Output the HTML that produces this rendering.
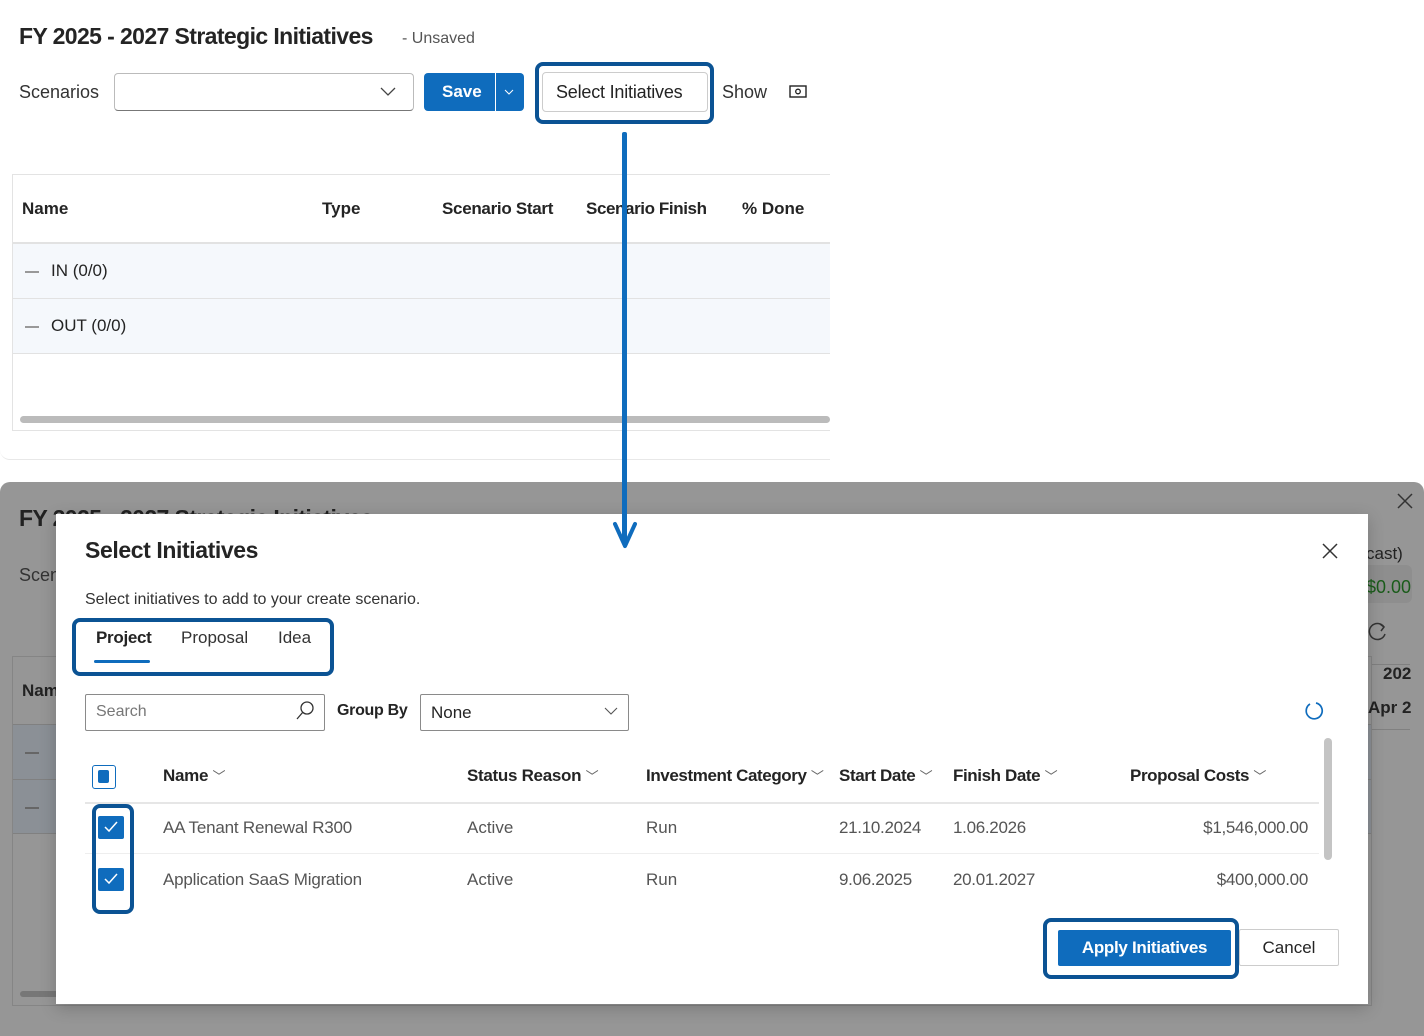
<!DOCTYPE html>
<html><head><meta charset="utf-8"><style>
*{box-sizing:border-box;margin:0;padding:0}
body{width:1424px;height:1036px;position:relative;background:#fff;font-family:"Segoe UI","Liberation Sans",sans-serif;color:#242424;overflow:hidden}
.a{position:absolute;white-space:nowrap}
.hl{position:absolute;border:4px solid #0b5394;border-radius:8px}
.r{text-align:right}
</style></head><body>
<div class="a" style="left:0;top:0;width:830px;height:460px;border-bottom-left-radius:10px;border-bottom:1px solid #e8e8e8"></div>
<div class="a" style="left:19px;top:23px;font-size:23px;font-weight:600;letter-spacing:-0.6px">FY 2025 - 2027 Strategic Initiatives</div>
<div class="a" style="left:402px;top:30px;font-size:16px;color:#555">- Unsaved</div>
<div class="a" style="left:19px;top:82px;font-size:18px;color:#333">Scenarios</div>
<div class="a" style="left:114px;top:73px;width:300px;height:38px;border:1px solid #bbb;border-bottom-color:#777;border-radius:4px"></div>
<svg class="a" style="left:380px;top:86px" width="16" height="12"><path d="M1 2l7 7 7-7" fill="none" stroke="#444" stroke-width="1.3"/></svg>
<div class="a" style="left:424px;top:73px;width:100px;height:38px;background:#0f6cbd;border-radius:4px"></div>
<div class="a" style="left:442px;top:82px;font-size:17px;color:#fff;font-weight:600">Save</div>
<div class="a" style="left:495px;top:73px;width:1px;height:38px;background:#fff"></div>
<svg class="a" style="left:504px;top:88px" width="10" height="8"><path d="M1 2l4 4 4-4" fill="none" stroke="#fff" stroke-width="1"/></svg>
<div class="hl" style="left:535px;top:62px;width:179px;height:62px"></div>
<div class="a" style="left:542px;top:72px;width:166px;height:40px;border:1px solid #ccc;border-radius:4px"></div>
<div class="a" style="left:556px;top:82px;font-size:18px;font-weight:500;letter-spacing:-0.2px">Select Initiatives</div>
<div class="a" style="left:722px;top:82px;font-size:18px;color:#333">Show</div>
<svg class="a" style="left:789px;top:84px" width="19" height="15"><rect x="1" y="2" width="16" height="11" fill="none" stroke="#222" stroke-width="1.4"/><circle cx="9" cy="7.5" r="2.3" fill="none" stroke="#222" stroke-width="1.3"/></svg>
<div class="a" style="left:12px;top:174px;width:818px;height:257px;border:1px solid #e3e3e3;border-right:none"></div>
<div class="a" style="left:22px;top:199px;font-size:17px;font-weight:600">Name</div>
<div class="a" style="left:322px;top:199px;font-size:17px;font-weight:600">Type</div>
<div class="a" style="left:442px;top:199px;font-size:17px;font-weight:600;letter-spacing:-0.3px">Scenario Start</div>
<div class="a" style="left:586px;top:199px;font-size:17px;font-weight:600;letter-spacing:-0.4px">Scenario Finish</div>
<div class="a" style="left:742px;top:199px;font-size:17px;font-weight:600">% Done</div>
<div class="a" style="left:13px;top:242px;width:817px;height:112px;background:#f5f8fc;border-top:2px solid #e2e2e2;border-bottom:1px solid #e2e2e2"></div>
<div class="a" style="left:13px;top:298px;width:817px;height:1px;background:#e2e2e2"></div>
<div class="a" style="left:25px;top:271px;width:14px;height:2px;background:#999"></div>
<div class="a" style="left:51px;top:261px;font-size:17px">IN (0/0)</div>
<div class="a" style="left:25px;top:326px;width:14px;height:2px;background:#999"></div>
<div class="a" style="left:51px;top:316px;font-size:17px">OUT (0/0)</div>
<div class="a" style="left:20px;top:416px;width:810px;height:7px;background:#bbb;border-radius:4px"></div>
<div class="a" style="left:0;top:482px;width:1424px;height:554px;background:#969696;border-radius:10px 10px 0 0"></div>
<div class="a" style="left:19px;top:505px;font-size:23px;font-weight:600;color:#222;letter-spacing:-0.6px">FY 2025 - 2027 Strategic Initiatives</div>
<div class="a" style="left:19px;top:565px;font-size:18px;color:#333">Scenarios</div>
<div class="a" style="left:12px;top:656px;width:1360px;height:350px;border:1px solid #858585"></div>
<div class="a" style="left:22px;top:681px;font-size:17px;font-weight:600;color:#222">Name</div>
<div class="a" style="left:13px;top:724px;width:1358px;height:110px;background:#8b9096;border-top:1px solid #808080;border-bottom:1px solid #808080"></div>
<div class="a" style="left:13px;top:779px;width:1358px;height:1px;background:#808080"></div>
<div class="a" style="left:25px;top:752px;width:14px;height:2px;background:#666"></div>
<div class="a" style="left:25px;top:807px;width:14px;height:2px;background:#666"></div>
<div class="a" style="left:20px;top:991px;width:40px;height:6px;background:#777;border-radius:3px"></div>
<svg class="a" style="left:1396px;top:492px" width="18" height="18"><path d="M2 2l14 14M16 2L2 16" stroke="#333" stroke-width="1.5"/></svg>
<div class="a" style="left:1366px;top:544px;font-size:17px;color:#222">cast)</div>
<div class="a" style="left:1360px;top:565px;width:52px;height:38px;background:#8e8e8e;border-radius:6px"></div>
<div class="a" style="left:1366px;top:577px;font-size:18px;color:#1a5c1a">$0.00</div>
<svg class="a" style="left:1366px;top:621px" width="22" height="22"><path d="M18 6A8 8 0 1 0 19 13" fill="none" stroke="#333" stroke-width="1.5"/><path d="M14 3l4 3-3 4" fill="none" stroke="#333" stroke-width="1.5"/></svg>
<div class="a" style="left:1372px;top:664px;width:38px;height:66px;border-top:1px solid #808080;border-bottom:1px solid #808080"></div>
<div class="a" style="left:1383px;top:664px;font-size:17px;font-weight:600;color:#222">202</div>
<div class="a" style="left:1368px;top:698px;font-size:17px;font-weight:600;color:#222">Apr 2</div>
<div class="a" style="left:56px;top:514px;width:1312px;height:490px;background:#fff;box-shadow:0 4px 16px rgba(0,0,0,.2)"></div>
<div class="a" style="left:85px;top:537px;font-size:23px;font-weight:600;letter-spacing:-0.4px">Select Initiatives</div>
<svg class="a" style="left:1322px;top:543px" width="16" height="16"><path d="M1 1l14 14M15 1L1 15" stroke="#333" stroke-width="1.5"/></svg>
<div class="a" style="left:85px;top:591px;font-size:16px;color:#333">Select initiatives to add to your create scenario.</div>
<div class="hl" style="left:72px;top:618px;width:262px;height:58px"></div>
<div class="a" style="left:96px;top:628px;font-size:17px;font-weight:600;letter-spacing:-0.3px">Project</div>
<div class="a" style="left:94px;top:660px;width:56px;height:3px;background:#0f6cbd;border-radius:2px"></div>
<div class="a" style="left:181px;top:628px;font-size:17px;color:#333">Proposal</div>
<div class="a" style="left:278px;top:628px;font-size:17px;color:#333">Idea</div>
<div class="a" style="left:85px;top:694px;width:240px;height:37px;border:1px solid #8a8a8a;border-radius:2px"></div>
<div class="a" style="left:96px;top:703px;font-size:16px;color:#777">Search</div>
<svg class="a" style="left:294px;top:700px" width="22" height="22"><circle cx="13" cy="8" r="6" fill="none" stroke="#333" stroke-width="1.3"/><path d="M9 12l-6 7" stroke="#333" stroke-width="1.3"/></svg>
<div class="a" style="left:337px;top:702px;font-size:16px;font-weight:600;letter-spacing:-0.3px">Group By</div>
<div class="a" style="left:420px;top:694px;width:209px;height:37px;border:1px solid #8a8a8a;border-radius:2px"></div>
<div class="a" style="left:431px;top:703px;font-size:17px">None</div>
<svg class="a" style="left:604px;top:706px" width="14" height="10"><path d="M1 2l6 6 6-6" fill="none" stroke="#555" stroke-width="1.1"/></svg>
<svg class="a" style="left:1303px;top:700px" width="22" height="22"><path d="M7 4A8 8 0 1 0 13 3" fill="none" stroke="#0f6cbd" stroke-width="1.7"/></svg>
<div class="a" style="left:92px;top:765px;width:24px;height:24px;border:1.5px solid #0f6cbd;border-radius:3px"></div>
<div class="a" style="left:98px;top:770px;width:11px;height:13px;background:#0f6cbd;border-radius:2px"></div>
<div class="a" style="left:163px;top:766px;font-size:17px;font-weight:600;letter-spacing:-0.3px">Name <span style="font-weight:300;color:#666;font-size:13px">﹀</span></div>
<div class="a" style="left:467px;top:766px;font-size:17px;font-weight:600;letter-spacing:-0.3px">Status Reason <span style="font-weight:300;color:#666;font-size:13px">﹀</span></div>
<div class="a" style="left:646px;top:766px;font-size:17px;font-weight:600;letter-spacing:-0.4px">Investment Category <span style="font-weight:300;color:#666;font-size:13px">﹀</span></div>
<div class="a" style="left:839px;top:766px;font-size:17px;font-weight:600;letter-spacing:-0.4px">Start Date <span style="font-weight:300;color:#666;font-size:13px">﹀</span></div>
<div class="a" style="left:953px;top:766px;font-size:17px;font-weight:600;letter-spacing:-0.4px">Finish Date <span style="font-weight:300;color:#666;font-size:13px">﹀</span></div>
<div class="a" style="left:1130px;top:766px;font-size:17px;font-weight:600;letter-spacing:-0.4px">Proposal Costs <span style="font-weight:300;color:#666;font-size:13px">﹀</span></div>
<div class="a" style="left:85px;top:802px;width:1234px;height:2px;background:#e6e6e6"></div>
<div class="a" style="left:85px;top:853px;width:1234px;height:1px;background:#eee"></div>
<div class="a" style="left:1324px;top:738px;width:8px;height:122px;background:#c4c4c4;border-radius:4px"></div>
<div class="hl" style="left:92px;top:804px;width:42px;height:110px"></div>
<div class="a" style="left:98px;top:816px;width:26px;height:23px;background:#0f6cbd;border-radius:2px"></div>
<svg class="a" style="left:103px;top:820px" width="16" height="14"><path d="M2 7l4 4 8-9" fill="none" stroke="#fff" stroke-width="1.5"/></svg>
<div class="a" style="left:98px;top:868px;width:26px;height:23px;background:#0f6cbd;border-radius:2px"></div>
<svg class="a" style="left:103px;top:872px" width="16" height="14"><path d="M2 7l4 4 8-9" fill="none" stroke="#fff" stroke-width="1.5"/></svg>
<div class="a" style="left:163px;top:818px;font-size:17px;color:#555;letter-spacing:-0.2px">AA Tenant Renewal R300</div>
<div class="a" style="left:467px;top:818px;font-size:17px;color:#555">Active</div>
<div class="a" style="left:646px;top:818px;font-size:17px;color:#555">Run</div>
<div class="a" style="left:839px;top:818px;font-size:17px;color:#555;letter-spacing:-0.3px">21.10.2024</div>
<div class="a" style="left:953px;top:818px;font-size:17px;color:#555;letter-spacing:-0.3px">1.06.2026</div>
<div class="a r" style="left:1108px;width:200px;top:818px;font-size:17px;color:#555;letter-spacing:-0.3px">$1,546,000.00</div>
<div class="a" style="left:163px;top:870px;font-size:17px;color:#555;letter-spacing:-0.2px">Application SaaS Migration</div>
<div class="a" style="left:467px;top:870px;font-size:17px;color:#555">Active</div>
<div class="a" style="left:646px;top:870px;font-size:17px;color:#555">Run</div>
<div class="a" style="left:839px;top:870px;font-size:17px;color:#555;letter-spacing:-0.3px">9.06.2025</div>
<div class="a" style="left:953px;top:870px;font-size:17px;color:#555;letter-spacing:-0.3px">20.01.2027</div>
<div class="a r" style="left:1108px;width:200px;top:870px;font-size:17px;color:#555;letter-spacing:-0.3px">$400,000.00</div>
<div class="hl" style="left:1043px;top:918px;width:196px;height:61px"></div>
<div class="a" style="left:1058px;top:930px;width:173px;height:36px;background:#0f6cbd;border-radius:2px"></div>
<div class="a" style="left:1058px;width:173px;text-align:center;top:938px;font-size:17px;font-weight:600;color:#fff;letter-spacing:-0.3px">Apply Initiatives</div>
<div class="a" style="left:1239px;top:929px;width:100px;height:37px;border:1px solid #ccc;border-radius:2px"></div>
<div class="a" style="left:1239px;width:100px;text-align:center;top:938px;font-size:17px;font-weight:500">Cancel</div>
<div class="a" style="left:622px;top:132px;width:5px;height:410px;background:#0f6cbd;border-radius:2px"></div>
<svg class="a" style="left:612px;top:520px" width="26" height="30"><path d="M3 4l10 22 10-22" fill="none" stroke="#0f6cbd" stroke-width="4" stroke-linecap="round" stroke-linejoin="round"/></svg>
</body></html>
